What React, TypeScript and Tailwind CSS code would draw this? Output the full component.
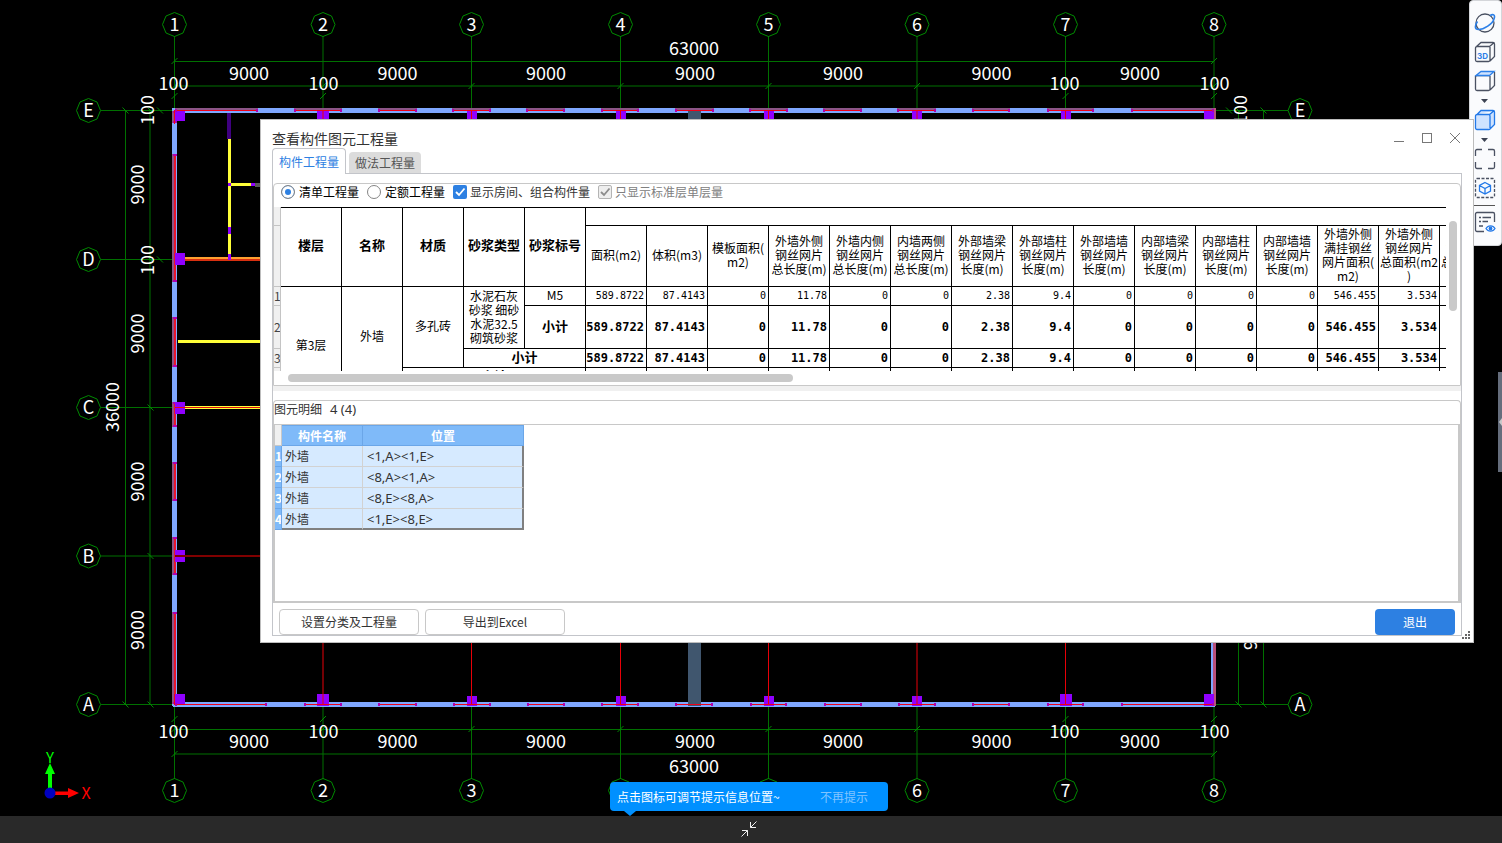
import { ReactNode } from "react";
import clsx from "clsx";

const GRID_X = [174.5, 323, 471.5, 620.5, 768.5, 917, 1065.5, 1214];
const GRID_Y = [
  { name: "E", y: 110.5 },
  { name: "D", y: 259.5 },
  { name: "C", y: 407.5 },
  { name: "B", y: 556 },
  { name: "A", y: 704.5 },
];

const TOP_WINDOWS = [
  [175, 258],
  [294, 342],
  [378, 417],
  [452, 491],
  [526, 565],
  [601, 639],
  [675, 714],
  [749, 788],
  [823, 862],
  [897, 936],
  [972, 1010],
  [1047, 1094],
  [1131, 1214],
];
const BOTTOM_WINDOWS = [
  [175, 267],
  [304, 342],
  [378, 417],
  [453, 491],
  [527, 565],
  [601, 639],
  [675, 713],
  [750, 787],
  [824, 862],
  [898, 936],
  [972, 1010],
  [1047, 1084],
  [1121, 1214],
];
const LEFT_WINDOWS = [
  [111, 123],
  [154, 282],
  [317, 367],
  [402, 427],
  [462, 501],
  [537, 575],
  [612, 704],
];

interface IColumn {
  title: string[];
  value: string;
}

const columns: IColumn[] = [
  { title: ["面积(m2)"], value: "589.8722" },
  { title: ["体积(m3)"], value: "87.4143" },
  { title: ["模板面积(", "m2)"], value: "0" },
  { title: ["外墙外侧", "钢丝网片", "总长度(m)"], value: "11.78" },
  { title: ["外墙内侧", "钢丝网片", "总长度(m)"], value: "0" },
  { title: ["内墙两侧", "钢丝网片", "总长度(m)"], value: "0" },
  { title: ["外部墙梁", "钢丝网片", "长度(m)"], value: "2.38" },
  { title: ["外部墙柱", "钢丝网片", "长度(m)"], value: "9.4" },
  { title: ["外部墙墙", "钢丝网片", "长度(m)"], value: "0" },
  { title: ["内部墙梁", "钢丝网片", "长度(m)"], value: "0" },
  { title: ["内部墙柱", "钢丝网片", "长度(m)"], value: "0" },
  { title: ["内部墙墙", "钢丝网片", "长度(m)"], value: "0" },
  { title: ["外墙外侧", "满挂钢丝", "网片面积(", "m2)"], value: "546.455" },
  { title: ["外墙外侧", "钢丝网片", "总面积(m2", ")"], value: "3.534" },
];

const details = [
  { name: "外墙", place: "<1,A><1,E>" },
  { name: "外墙", place: "<8,A><1,A>" },
  { name: "外墙", place: "<8,E><8,A>" },
  { name: "外墙", place: "<1,E><8,E>" },
];

const octagon = (cx: number, cy: number) =>
  Array.from({ length: 8 }, (_, i) => {
    const a = (i * Math.PI) / 4;
    return `${(cx + 12 * Math.cos(a)).toFixed(1)},${(cy + 12 * Math.sin(a)).toFixed(1)}`;
  }).join(" ");

const AxisMark = ({ x, y, name }: { x: number; y: number; name: string }) => (
  <g>
    <polygon points={octagon(x, y)} fill="none" stroke="#008a00" />
    <text x={x} y={y + 6.5}>
      {name}
    </text>
  </g>
);

const VText = ({ x, y, children }: { x: number; y: number; children: ReactNode }) => (
  <text x={x} y={y} transform={`rotate(-90 ${x} ${y})`}>
    {children}
  </text>
);

const Tick = ({ x, y, flip }: { x: number; y: number; flip?: boolean }) => (
  <path d={flip ? `M${x - 3} ${y - 3}l6 6` : `M${x - 3} ${y + 3}l6 -6`} stroke="#008a00" />
);

const HWindow = ({ from, to, y }: { from: number; to: number; y: number }) => (
  <g shapeRendering="crispEdges">
    <rect x={from} y={y - 1} width={to - from} height={1} fill="#f00018" />
    <rect x={from} y={y - 2} width={2} height={3} fill="#b000b0" />
    <rect x={to - 2} y={y - 2} width={2} height={3} fill="#b000b0" />
  </g>
);

const Plan = () => (
  <svg
    className="absolute inset-0 h-full w-full"
    viewBox="0 0 1502 816"
    preserveAspectRatio="xMinYMin slice"
    fontFamily='"Noto Sans CJK SC", sans-serif'
    fontSize="18"
    textAnchor="middle"
    fill="#fff"
  >
    {/* axis and dimension lines */}
    <g stroke="#007000">
      {GRID_X.map((x) => (
        <path key={x} d={`M${x} 36V110M${x} 705V779`} />
      ))}
      {GRID_Y.map(({ y }) => (
        <path key={y} d={`M101 ${y}H175M1214 ${y}H1288`} />
      ))}
      <path d="M175 61.5H1214M175 86H1214M175 729.5H1214M175 754H1214" />
      <path d="M125.5 110V705M150 110V705M1238.5 110V705M1263.5 110V705" />
    </g>

    {/* walls */}
    <g shapeRendering="crispEdges">
      <rect x="173" y="108" width="1042" height="5" fill="#7fa7ff" />
      <rect x="173" y="702" width="1042" height="5" fill="#7fa7ff" />
      <rect x="172" y="108" width="5" height="598" fill="#7fa7ff" />
      <rect x="1211" y="108" width="5" height="598" fill="#7fa7ff" />
      <rect x="1213" y="108" width="3" height="598" fill="#b8507c" />
      {TOP_WINDOWS.map(([a, b]) => (
        <rect key={a} x={a} y="108" width={b - a} height="3" fill="#8c5486" />
      ))}
      {LEFT_WINDOWS.map(([a, b]) => (
        <g key={a}>
          <rect x="172" y={a} width="2" height={b - a} fill="#8c5486" />
          <rect x="174" y={a} width="2" height={b - a} fill="#e8142c" />
          <rect x="173" y={a} width="4" height="2" fill="#b000b0" />
          <rect x="173" y={b - 2} width="4" height="2" fill="#b000b0" />
        </g>
      ))}
      <g fill="#9000ff">
        {GRID_X.slice(1, 7).map((x, i) => (
          <g key={x}>
            <rect x={i === 0 ? 317 : x - 5} y="110" width={i === 0 ? 12 : 10} height="14" />
            <rect
              x={i === 0 || i === 5 ? x - 6 : x - 5}
              y={i === 0 || i === 5 ? 694 : 696}
              width={i === 0 || i === 5 ? 12 : 10}
              height={i === 0 || i === 5 ? 12 : 10}
            />
          </g>
        ))}
        <rect x="175" y="110" width="10" height="11" />
        <rect x="175" y="253" width="10" height="12" />
        <rect x="175" y="402" width="10" height="12" />
        <rect x="175" y="550" width="10" height="12" />
        <rect x="175" y="694" width="10" height="11" />
        <rect x="1204" y="110" width="10" height="12" />
        <rect x="1204" y="694" width="10" height="12" />
      </g>
      <rect x="688" y="111" width="13" height="595" fill="#40566e" />
      <path d="M174.5 110V124M174.5 694V705" stroke="#f00018" />
      {TOP_WINDOWS.map(([a, b]) => (
        <HWindow key={a} from={a} to={b} y={111} />
      ))}
      {BOTTOM_WINDOWS.map(([a, b]) => (
        <HWindow key={a} from={a} to={b} y={705} />
      ))}
    </g>
    {GRID_X.slice(1, 7).map((x) => (
      <path key={x} d={`M${x} 111V704`} stroke="#e80008" />
    ))}

    {/* rooms left of the window */}
    <g shapeRendering="crispEdges">
      <rect x="227" y="113" width="4" height="26" fill="#3f0080" />
      <rect x="228" y="139" width="3" height="120" fill="#ffff38" />
      <rect x="228" y="227" width="3" height="7" fill="#9000ff" />
      <rect x="231" y="183" width="20" height="3" fill="#ffff38" />
      <rect x="228" y="183" width="3" height="3" fill="#9000ff" />
      <rect x="251" y="183" width="4" height="3" fill="#9000ff" />
      <rect x="255" y="183" width="8" height="4" fill="#585858" />
      <rect x="185" y="257" width="78" height="2" fill="#ffa030" />
      <rect x="185" y="259" width="78" height="2" fill="#d83010" />
      <rect x="228" y="254" width="3" height="6" fill="#9000ff" />
      <rect x="178" y="340" width="85" height="3" fill="#ffff38" />
      <rect x="185" y="406" width="78" height="3" fill="#ffff38" />
      <rect x="175" y="407" width="88" height="1" fill="#e01010" />
      <rect x="175" y="555" width="88" height="2" fill="#800000" />
    </g>

    {/* ticks */}
    {GRID_X.map((x, i) => (
      <g key={x}>
        <Tick x={x} y={86} />
        <Tick x={x} y={729} />
        {(i < 2 || i > 5) && <Tick x={x} y={96} />}
        {(i < 2 || i > 5) && <Tick x={x} y={719} />}
        {(i === 0 || i === 7) && <Tick x={x} y={61} />}
        {(i === 0 || i === 7) && <Tick x={x} y={754} />}
      </g>
    ))}
    {GRID_Y.map(({ name, y }) => (
      <g key={name}>
        <Tick x={150.5} y={y} flip />
        <Tick x={1238.5} y={y} flip />
        {(name === "E" || name === "D") && <Tick x={160} y={y} flip />}
        {name === "E" && <Tick x={1229} y={y} flip />}
        {(name === "E" || name === "A") && <Tick x={125.5} y={y} flip />}
        {(name === "E" || name === "A") && <Tick x={1263.5} y={y} flip />}
      </g>
    ))}

    {/* axis names */}
    {GRID_X.map((x, i) => (
      <g key={x}>
        <AxisMark x={x} y={24.5} name={`${i + 1}`} />
        <AxisMark x={x} y={790.5} name={`${i + 1}`} />
      </g>
    ))}
    {GRID_Y.map(({ name, y }) => (
      <g key={name}>
        <AxisMark x={88.5} y={y} name={name} />
        <AxisMark x={1300} y={y} name={name} />
      </g>
    ))}

    {/* dimensions */}
    {GRID_X.slice(0, 7).map((x) => (
      <g key={x}>
        <text x={x + 74.5} y="80">9000</text>
        <text x={x + 74.5} y="748">9000</text>
      </g>
    ))}
    {[173.5, 323.5, 1064.5, 1214.5].map((x) => (
      <g key={x}>
        <text x={x} y="90">100</text>
        <text x={x} y="738">100</text>
      </g>
    ))}
    <text x="694" y="55">63000</text>
    <text x="694" y="773">63000</text>
    {GRID_Y.slice(0, 4).map(({ y }) => (
      <g key={y}>
        <VText x={144} y={y + 74}>9000</VText>
        <VText x={1257} y={y + 74}>9000</VText>
      </g>
    ))}
    <VText x={154} y={110}>100</VText>
    <VText x={154} y={260}>100</VText>
    <VText x={1247} y={110}>100</VText>
    <VText x={119} y={407}>36000</VText>

    {/* coordinate axes */}
    <path d="M48 793V774H45L50 763L55 774H52V793Z" fill="#00ff00" />
    <path d="M50 791.5H68V788L79 793L68 798V795H50Z" fill="#ff0000" />
    <circle cx="50" cy="793" r="5.5" fill="#0000c0" />
    <text x="50" y="763" fontSize="15" fill="#00ff00">Y</text>
    <text x="86" y="799" fontSize="16" fill="#ff0000">X</text>
  </svg>
);

const ToolButton = ({ label, children }: { label: string; children: ReactNode }) => (
  <button aria-label={label} className="block h-5 w-5">
    <svg viewBox="0 0 20 20" className="h-5 w-5 overflow-visible" fill="none" stroke="#4a5162" strokeWidth="1.3">
      {children}
    </svg>
  </button>
);

const DownArrow = () => (
  <div className="flex h-[19px] items-center">
    <svg width="7" height="4" fill="#3c4353">
      <path d="M0 0H7L3.5 4Z" />
    </svg>
  </div>
);

const Toolbar = () => (
  <div className="absolute top-0 right-0 flex h-[246px] w-[33px] flex-col items-center rounded-sm border border-[#d4d6da] bg-[#fafbfd] pt-3 pr-0.5">
    <ToolButton label="动态观察">
      <circle cx="10" cy="10" r="9" />
      <path
        d="M15 2.500C18.500 .5 20.500 2 19 6C17.500 11 9 16.500 3.500 16.500C-.5 16.500 -.5 12.500 2.500 8.500"
        stroke="#2d80e8"
        strokeWidth="1.6"
      />
    </ToolButton>
    <div className="mt-[9px] flex flex-col gap-[9px]">
      <ToolButton label="三维">
        <path d="M14.500 4.500H2A1.500 1.500 0 0 0 .5 6V18A1.500 1.500 0 0 0 2 19.500H13.500A1.500 1.500 0 0 0 15 18V5M1.500 4.500L6 .5H18A1.500 1.500 0 0 1 19.500 2V14.500L15 19M14.500 4.500L19 .8" />
        <text x="2" y="17" fontSize="8" fontWeight="700" fontFamily="Inter, sans-serif" fill="#2d80e8" stroke="none">
          3D
        </text>
      </ToolButton>
      <ToolButton label="俯视">
        <path d="M14.500 4.500H2A1.500 1.500 0 0 0 .5 6V18A1.500 1.500 0 0 0 2 19.500H13.500A1.500 1.500 0 0 0 15 18V5M19.500 1V14.500L15 19" />
        <path d="M1 4.500L6 .5H19L14.500 4.500Z" fill="#cfe3ff" stroke="#2d80e8" />
      </ToolButton>
    </div>
    <DownArrow />
    <ToolButton label="实体">
      <path
        d="M2 4.500L6 .5H18A1.500 1.500 0 0 1 19.500 2V14.500L15 19A1.500 1.500 0 0 1 13.500 19.500H2A1.500 1.500 0 0 1 .5 18V6A1.500 1.500 0 0 1 2 4.500H14.500L19 .8M14.500 4.500L15 6V18"
        fill="#cfe3ff"
        stroke="#2379e8"
      />
    </ToolButton>
    <DownArrow />
    <div className="flex flex-col gap-[9px]">
      <ToolButton label="全屏">
        <path d="M.5 7V2A1.500 1.500 0 0 1 2 .5H7M13 .5H18A1.500 1.500 0 0 1 19.500 2V7M19.500 13V18A1.500 1.500 0 0 1 18 19.500H13M7 19.500H2A1.500 1.500 0 0 1 .5 18V13" />
      </ToolButton>
      <ToolButton label="局部三维">
        <rect x=".5" y=".5" width="19" height="19" rx="1.5" strokeDasharray="3 1.500" />
        <path d="M10 4.500L15.500 7.500V13L10 16L4.500 13V7.500ZM4.500 7.500L10 10.500L15.500 7.500M10 10.500V16" stroke="#2379e8" />
      </ToolButton>
    </div>
    <div className="flex h-[14px] w-full items-center px-1">
      <div className="h-px w-full bg-[#555]" />
    </div>
    <ToolButton label="显示设置">
      <path d="M9 19.500H2A1.500 1.500 0 0 1 .5 18V2A1.500 1.500 0 0 1 2 .5H18A1.500 1.500 0 0 1 19.500 2V10M4 5.500H6M7.500 5.500H16M4 9.500H6M7.500 9.500H13M4 14H8" />
      <path d="M11 16.500C13 13 18 13 20 16.500C18 20 13 20 11 16.500Z" stroke="#2379e8" />
      <circle cx="15.500" cy="16.500" r="1.300" fill="#2379e8" stroke="#2379e8" />
    </ToolButton>
  </div>
);

const Radio = ({ label, checked }: { label: string; checked?: boolean }) => (
  <label className="flex items-center gap-1 text-black">
    <input
      type="radio"
      name="kind"
      defaultChecked={checked}
      className="h-[14px] w-[14px] appearance-none rounded-full border border-[#858585] bg-white checked:bg-[#2d80e2] checked:shadow-[inset_0_0_0_3px_#fff]"
    />
    {label}
  </label>
);

const Check = ({ label, disabled }: { label: string; disabled?: boolean }) => (
  <label className={clsx("flex items-center gap-[3px]", disabled ? "text-[#808080]" : "text-[#333]")}>
    <span className="relative block h-[14px] w-[14px]">
      <input
        type="checkbox"
        defaultChecked
        disabled={disabled}
        className={clsx(
          "block h-[14px] w-[14px] appearance-none rounded-xs",
          disabled ? "border border-[#b4b4b4] bg-[#eee]" : "bg-[#2d80e2]"
        )}
      />
      <svg
        viewBox="0 0 14 14"
        className="pointer-events-none absolute inset-0"
        fill="none"
        stroke={disabled ? "#8c8c8c" : "#fff"}
        strokeWidth="1.8"
      >
        <path d="M3 7L6 10L11.500 3.500" />
      </svg>
    </span>
    {label}
  </label>
);

const Cell = ({
  children,
  bold,
  num,
  rowSpan,
  colSpan,
}: {
  children?: ReactNode;
  bold?: boolean;
  num?: boolean;
  rowSpan?: number;
  colSpan?: number;
}) => (
  <td
    rowSpan={rowSpan}
    colSpan={colSpan}
    className={clsx(
      "border-r border-b border-black p-0 whitespace-nowrap",
      num ? "pr-0.5 text-right font-['DejaVu_Sans_Mono','Liberation_Mono',monospace]" : "pb-0.5 text-center",
      num && !bold && "text-[10px]",
      num && bold && "text-[12px] font-bold",
      !num && bold && "text-[13px] font-bold"
    )}
  >
    {children}
  </td>
);

const RowHead = ({ children }: { children?: ReactNode }) => (
  <th className="overflow-hidden border-r border-b border-[#c4c4c4] bg-[#f0f0f0] p-0 text-left text-[12px] font-normal text-[#444]">
    {children}
  </th>
);

const Values = ({ bold }: { bold?: boolean }) => (
  <>
    {columns.map((c, i) => (
      <Cell key={i} num bold={bold}>
        {c.value}
      </Cell>
    ))}
    <Cell />
  </>
);

const QuantityTable = () => (
  <table className="w-[1227px] table-fixed border-separate border-spacing-0 text-[12px] leading-[14px] text-black">
    <colgroup>
      <col className="w-[7px]" />
      {Array.from({ length: 20 }, (_, i) => (
        <col key={i} className="w-[61px]" />
      ))}
    </colgroup>
    <thead>
      <tr className="h-[19px]">
        <RowHead />
        {["楼层", "名称", "材质", "砂浆类型", "砂浆标号"].map((t) => (
          <th
            key={t}
            rowSpan={2}
            className="border-t border-r border-b border-black p-0 pb-1 text-[13px] whitespace-nowrap"
          >
            {t}
          </th>
        ))}
        <th colSpan={15} className="border-t border-b border-black p-0"></th>
      </tr>
      <tr className="h-[61px]">
        <RowHead />
        {columns.map((c, i) => (
          <th key={i} className="border-r border-b border-black p-0 pb-0.5 font-normal whitespace-nowrap">
            {c.title.map((line) => (
              <div key={line}>{line}</div>
            ))}
          </th>
        ))}
        <th className="border-r border-b border-black p-0 pb-0.5 font-normal whitespace-nowrap">
          <div>外墙内侧</div>
          <div>钢丝网片</div>
          <div>总面积(m2</div>
          <div>)</div>
        </th>
      </tr>
    </thead>
    <tbody>
      <tr className="h-[19px]">
        <RowHead>1</RowHead>
        <Cell rowSpan={5}>第3层</Cell>
        <Cell rowSpan={4}>外墙</Cell>
        <Cell rowSpan={3}>多孔砖</Cell>
        <Cell rowSpan={2}>
          水泥石灰
          <br />
          砂浆 细砂
          <br />
          水泥32.5
          <br />
          砌筑砂浆
        </Cell>
        <Cell>M5</Cell>
        <Values />
      </tr>
      <tr className="h-[43px]">
        <RowHead>2</RowHead>
        <Cell bold>小计</Cell>
        <Values bold />
      </tr>
      <tr className="h-[19px]">
        <RowHead>3</RowHead>
        <Cell bold colSpan={2}>
          小计
        </Cell>
        <Values bold />
      </tr>
      <tr className="h-[19px]">
        <RowHead>4</RowHead>
        <Cell bold colSpan={3}>
          小计
        </Cell>
        <Values bold />
      </tr>
      <tr className="h-[19px]">
        <RowHead>5</RowHead>
        <Cell bold colSpan={4}>
          小计
        </Cell>
        <Values bold />
      </tr>
    </tbody>
  </table>
);

const DetailTable = () => (
  <table className="w-[249px] table-fixed border-separate border-spacing-0 text-[12px] leading-4 text-[#333]">
    <colgroup>
      <col className="w-[7px]" />
      <col className="w-[81px]" />
      <col className="w-[161px]" />
    </colgroup>
    <thead>
      <tr className="h-[21px] text-white">
        <th className="border-r border-b border-[#c8c8c8] bg-[#f0f0f0] p-0"></th>
        <th className="border-t border-r border-b border-[#6ba6e8] bg-[#7fbaf9] p-0">构件名称</th>
        <th className="border-t border-r border-b border-[#6ba6e8] bg-[#7fbaf9] p-0">位置</th>
      </tr>
    </thead>
    <tbody>
      {details.map((d, i) => {
        const last = i === details.length - 1;
        const line = last ? "border-b-2 border-b-[#808080]" : "border-b border-b-[#d2d2d2]";
        return (
          <tr key={i} className="h-[21px]">
            <th className="overflow-hidden border-r border-b border-[#6ba6e8] bg-[#7fbaf9] p-0 text-left text-white">
              {i + 1}
            </th>
            <td className={clsx("border-r border-r-[#d2d2d2] bg-[#d6eaff] p-0 pl-[3px]", line)}>{d.name}</td>
            <td
              className={clsx(
                "border-r-2 border-r-[#808080] bg-[#d6eaff] p-0 pl-1 font-['Noto_Sans',sans-serif] text-[13px]",
                line
              )}
            >
              {d.place}
            </td>
          </tr>
        );
      })}
    </tbody>
  </table>
);

const QuantityDialog = () => (
  <section className="absolute top-[119px] right-7 left-[260px] border border-[#bdbdbd] bg-white px-[11px] pb-1.5 text-[12px] leading-4">
    <header className="flex h-7 items-center justify-between pt-2">
      <h1 className="text-[14px] text-[#333]">查看构件图元工程量</h1>
      <div className="flex gap-4 pr-px text-[#777]">
        <button aria-label="最小化" className="h-3 w-3">
          <svg viewBox="0 0 12 12" fill="none" stroke="currentColor">
            <path d="M1 9.500H11" />
          </svg>
        </button>
        <button aria-label="最大化" className="h-3 w-3">
          <svg viewBox="0 0 12 12" fill="none" stroke="currentColor">
            <rect x="1.500" y="1.500" width="9" height="9" />
          </svg>
        </button>
        <button aria-label="关闭" className="h-3 w-3">
          <svg viewBox="0 0 12 12" fill="none" stroke="currentColor">
            <path d="M1 1L11 11M11 1L1 11" />
          </svg>
        </button>
      </div>
    </header>

    <div className="relative z-10 -mb-px flex items-end gap-[3px]">
      <button className="h-[26px] w-[74px] rounded-t border border-b-0 border-[#c3c5ca] bg-white text-[#2d80e2]">
        构件工程量
      </button>
      <button className="mb-px h-[21px] w-[72px] rounded-t bg-[#dcdcdc] text-[#555]">做法工程量</button>
    </div>

    <div className="border border-[#c3c5ca] pt-[9px]">
      <div className="rounded-t border border-[#c8c8c8]">
        <div className="flex h-[23px] items-center pb-[7px] pl-[7px]">
          <div className="flex gap-2">
            <Radio label="清单工程量" checked />
            <Radio label="定额工程量" />
            <Check label="显示房间、组合构件量" />
            <Check label="只显示标准层单层量" disabled />
          </div>
        </div>
        <div className="flex h-[164px] pr-[3px]">
          <div className="min-w-0 flex-1 overflow-hidden">
            <QuantityTable />
          </div>
          <div className="mt-[14px] ml-[3px] h-[90px] w-2 rounded-full bg-[#c9c9c9]" />
        </div>
        <div className="py-[3px] pl-[14px]">
          <div className="h-2 w-[505px] rounded-full bg-[#c9c9c9]" />
        </div>
      </div>
      <div className="h-[5px] bg-[#f0f0f0]" />
      <div className="mt-[9px] rounded-t border border-b-0 border-[#c8c8c8]">
        <h2 className="h-[23px] text-[#333]">
          图元明细<span className="ml-2 font-['Noto_Sans',sans-serif] text-[13px]">4 (4)</span>
        </h2>
        <div className="min-h-[179px] border border-r-2 border-b-2 border-[#c8c8c8]">
          <DetailTable />
        </div>
      </div>
      <footer className="flex gap-1.5 px-1.5 pt-1.5 text-[#333]">
        <button className="h-[26px] w-[140px] rounded border border-[#c8c8c8]">设置分类及工程量</button>
        <button className="h-[26px] w-[140px] rounded border border-[#c8c8c8]">导出到Excel</button>
        <button className="ml-auto h-[26px] w-20 rounded bg-[#2d80e2] text-white">退出</button>
      </footer>
    </div>
    <svg className="absolute right-[3px] bottom-[3px]" width="8" height="8" fill="#666">
      <path d="M6 0h2v2h-2zM3 3h2v2h-2zM6 3h2v2h-2zM0 6h2v2h-2zM3 6h2v2h-2zM6 6h2v2h-2z" />
    </svg>
  </section>
);

const App = () => {
  return (
    <div className="flex h-screen flex-col overflow-hidden bg-black font-['Noto_Sans_CJK_SC',sans-serif]">
      <main className="relative flex-1">
        <Plan />
        <Toolbar />
        <button aria-label="展开" className="absolute top-[372px] right-0 h-[100px] w-1 bg-[#656d7c]">
          <svg width="4" height="8" fill="#c8c8c8">
            <path d="M4 0V8L1 4Z" />
          </svg>
        </button>
        <QuantityDialog />
        <div className="absolute bottom-[5px] left-[610px] flex h-[29px] w-[278px] items-center rounded bg-[#0090ff] px-[7px] text-[12px] text-white">
          点击图标可调节提示信息位置~
          <button className="ml-auto pr-[13px] text-[#80c4ff]">不再提示</button>
          <svg className="absolute top-full left-[14px]" width="12" height="5" fill="#0090ff">
            <path d="M0 0H12L6 5Z" />
          </svg>
        </div>
      </main>
      <footer className="flex h-[27px] items-center justify-center bg-[#292929] pr-1 pb-0.5">
        <button aria-label="收起" className="block">
          <svg className="block h-4 w-4" viewBox="0 0 16 16" fill="none" stroke="#f0f0f0">
            <path d="M9.500 1V6.500H15M9.500 6.500L15.500 .5M1 9.500H6.500V15M6.500 9.500L.5 15.500" />
          </svg>
        </button>
      </footer>
    </div>
  );
};

export default App;
